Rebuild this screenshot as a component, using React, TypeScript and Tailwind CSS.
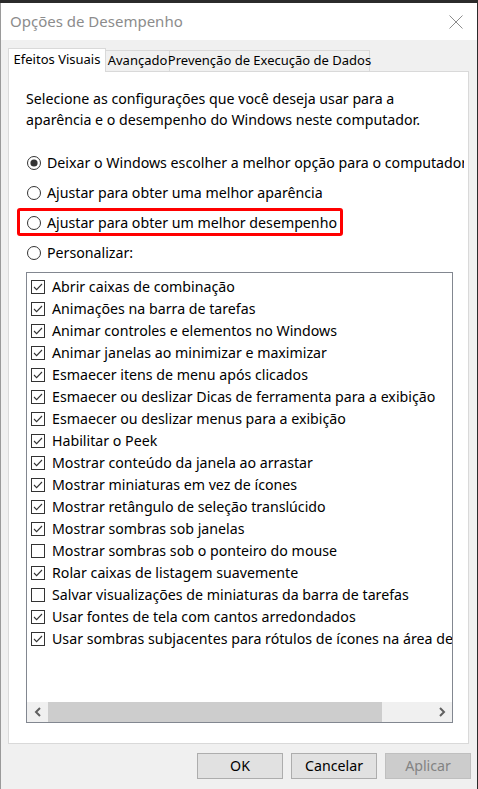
import React from 'react';

const font = '[font-family:"Noto_Sans","Liberation_Sans",sans-serif]';

const items: { label: string; checked: boolean }[] = [
  { label: 'Abrir caixas de combinação', checked: true },
  { label: 'Animações na barra de tarefas', checked: true },
  { label: 'Animar controles e elementos no Windows', checked: true },
  { label: 'Animar janelas ao minimizar e maximizar', checked: true },
  { label: 'Esmaecer itens de menu após clicados', checked: true },
  { label: 'Esmaecer ou deslizar Dicas de ferramenta para a exibição', checked: true },
  { label: 'Esmaecer ou deslizar menus para a exibição', checked: true },
  { label: 'Habilitar o Peek', checked: true },
  { label: 'Mostrar conteúdo da janela ao arrastar', checked: true },
  { label: 'Mostrar miniaturas em vez de ícones', checked: true },
  { label: 'Mostrar retângulo de seleção translúcido', checked: true },
  { label: 'Mostrar sombras sob janelas', checked: true },
  { label: 'Mostrar sombras sob o ponteiro do mouse', checked: false },
  { label: 'Rolar caixas de listagem suavemente', checked: true },
  { label: 'Salvar visualizações de miniaturas da barra de tarefas', checked: false },
  { label: 'Usar fontes de tela com cantos arredondados', checked: true },
  { label: 'Usar sombras subjacentes para rótulos de ícones na área de trabalho', checked: true },
];

const Radio: React.FC<{ checked?: boolean }> = ({ checked }) => (
  <svg width="14" height="14" viewBox="0 0 14 14" className="shrink-0">
    <circle cx="7" cy="7" r="6.5" fill="white" stroke="#333" strokeWidth="1" />
    {checked && <circle cx="7" cy="7" r="3.6" fill="#333" />}
  </svg>
);

const Checkbox: React.FC<{ checked?: boolean }> = ({ checked }) => (
  <svg width="14" height="14" viewBox="0 0 14 14" className="shrink-0">
    <rect x="0.5" y="0.5" width="13" height="13" fill="white" stroke="#333" strokeWidth="1" />
    {checked && (
      <polyline points="3,7 5.6,9.6 11,4" fill="none" stroke="#333" strokeWidth="1.1" />
    )}
  </svg>
);

const RadioRow: React.FC<{ label: string; checked?: boolean }> = ({ label, checked }) => (
  <div className="h-[30px] flex items-center gap-[6px] pl-[1px] overflow-hidden">
    <Radio checked={checked} />
    <span className="whitespace-nowrap">{label}</span>
  </div>
);

const Button: React.FC<{ label: string; disabled?: boolean }> = ({ label, disabled }) => (
  <button
    className={
      disabled
        ? 'w-[86px] h-[26px] bg-[#cccccc] border border-[#bfbfbf] text-[#838383]'
        : 'w-[86px] h-[26px] bg-[#e1e1e1] border border-[#adadad] text-black'
    }
  >
    {label}
  </button>
);

const App: React.FC = () => {
  return (
    <div className={`w-[478px] h-[789px] flex flex-col bg-[#2b2b2b] pt-[3px] pr-px text-[14.2px] text-black ${font}`}>
      <div className="flex-1 flex flex-col border-l border-[#9a9a9a] bg-[#f0f0f0]">
        {/* title bar */}
        <div className="h-[37px] bg-white flex items-center justify-between pl-[9px] pr-[14px]">
          <span className="text-[15px] text-[#8c8c8c]">Opções de Desempenho</span>
          <svg width="14" height="14" viewBox="0 0 14 14">
            <path d="M0.5 0.5 L13.5 13.5 M13.5 0.5 L0.5 13.5" stroke="#8c8c8c" strokeWidth="1" />
          </svg>
        </div>

        <div className="flex-1 flex flex-col pl-[7px] pr-[8px] pt-[8px]">
          {/* tabs */}
          <div className="flex items-end whitespace-nowrap text-[13px]">
            <div className="w-[98px] h-[24px] bg-white border-x border-t border-[#d9d9d9] flex items-center justify-center pb-[1px]">
              Efeitos Visuais
            </div>
            <div className="w-[64px] h-[22px] border-t border-r border-b border-[#d9d9d9] flex items-center justify-center">
              Avançado
            </div>
            <div className="w-[200px] h-[22px] border-t border-r border-b border-[#d9d9d9] flex items-center justify-center">
              Prevenção de Execução de Dados
            </div>
            <div className="flex-1 border-b border-[#d9d9d9]" />
          </div>

          {/* panel */}
          <div className="h-[672px] bg-white border-x border-b border-[#d9d9d9] flex flex-col pl-[17px] pr-[4px] pt-[16px] pb-[20px]">
            <p className="leading-[21px]">
              Selecione as configurações que você deseja usar para a
              <br />
              aparência e o desempenho do Windows neste computador.
            </p>

            <div className="mt-[18px] flex flex-col">
              <RadioRow label="Deixar o Windows escolher a melhor opção para o computador" checked />
              <RadioRow label="Ajustar para obter uma melhor aparência" />
              <div className="relative">
                <RadioRow label="Ajustar para obter um melhor desempenho" />
                {/* annotation box drawn over the option */}
                <div className="absolute left-[-9px] top-0 w-[326px] h-[28px] border-[3px] border-[#ff0000] rounded-[3px]" />
              </div>
              <RadioRow label="Personalizar:" />
            </div>

            {/* list */}
            <div className="mt-[4px] mr-[11px] flex-1 border border-[#828790] flex flex-col overflow-hidden">
              <div className="flex-1 flex flex-col pt-[3px] pl-[4px] overflow-hidden">
                {items.map((it) => (
                  <div key={it.label} className="h-[22px] flex items-center gap-[7px] shrink-0">
                    <Checkbox checked={it.checked} />
                    <span className="whitespace-nowrap">{it.label}</span>
                  </div>
                ))}
              </div>
              <div className="h-[20px] flex bg-[#f0f0f0] shrink-0">
                <div className="w-[21px] flex items-center justify-center">
                  <svg width="8" height="10" viewBox="0 0 8 10">
                    <path d="M6 1 L2 5 L6 9" fill="none" stroke="#606060" strokeWidth="2" />
                  </svg>
                </div>
                <div className="flex-1 flex">
                  <div className="w-[334px] bg-[#cdcdcd]" />
                </div>
                <div className="w-[21px] flex items-center justify-center">
                  <svg width="8" height="10" viewBox="0 0 8 10">
                    <path d="M2 1 L6 5 L2 9" fill="none" stroke="#606060" strokeWidth="2" />
                  </svg>
                </div>
              </div>
            </div>
          </div>

          {/* buttons */}
          <div className="mt-[9px] flex justify-end gap-[8px] mr-[-2px]">
            <Button label="OK" />
            <Button label="Cancelar" />
            <Button label="Aplicar" disabled />
          </div>
        </div>
      </div>
    </div>
  );
};

export default App;
